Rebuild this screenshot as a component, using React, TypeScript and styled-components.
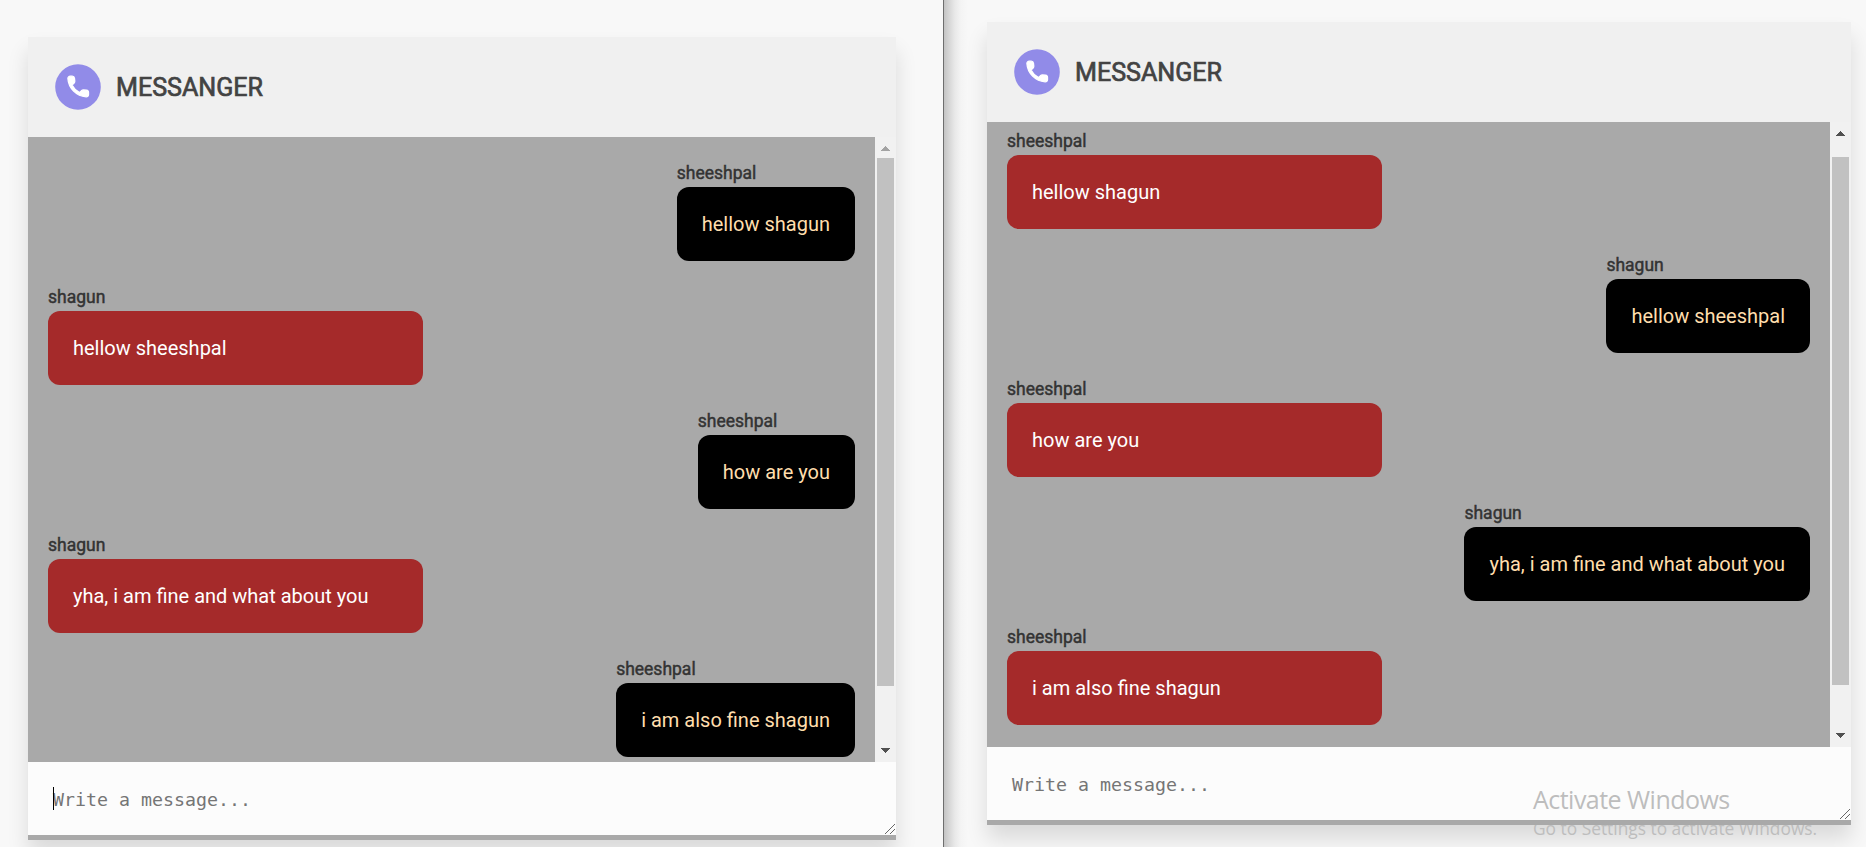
import React from "react";
import styled, { createGlobalStyle } from "styled-components";

const GlobalStyle = createGlobalStyle`
  * { box-sizing: border-box; }
  body { margin: 0; background: #f8f8f8; overflow: hidden; }
`;

const Screen = styled.div`
  display: flex;
  width: 1866px;
  height: 847px;
  overflow: hidden;
  font-family: Roboto, "Liberation Sans", sans-serif;
  background: #f8f8f8;
`;

const Pane = styled.section<{ $w: number; $pad: string; $divided?: boolean }>`
  flex: 0 0 ${(p) => p.$w}px;
  height: 847px;
  padding: ${(p) => p.$pad};
  overflow: hidden;
  ${(p) =>
    p.$divided &&
    `border-left: 1px solid #6e6e6e;
     background: linear-gradient(to right, #c4c4c4 0, #d6d6d6 5px, #e9e9e9 11px, #f4f4f4 17px, #f8f8f8 24px);`}
`;

const Card = styled.div`
  display: flex;
  flex-direction: column;
  box-shadow: 0 14px 20px rgba(0, 0, 0, 0.12);
`;

const Header = styled.header`
  display: flex;
  align-items: center;
  height: 100px;
  padding-left: 27px;
  gap: 13px;
  background: #f0f0f0;
`;

const Title = styled.h1`
  margin: 1px 0 0;
  font-size: 25.1px;
  font-weight: 400;
  line-height: 30px;
  -webkit-text-stroke: 0.7px #434343;
  color: #434343;
`;

const Chat = styled.div`
  display: flex;
  height: 625px;
  background: #a9a9a9;
`;

const Messages = styled.div<{ $top: number }>`
  flex: 1;
  display: flex;
  flex-direction: column;
  gap: 25px;
  padding: ${(p) => p.$top}px 20px 0;
  overflow: hidden;
`;

const Message = styled.div<{ $mine?: boolean }>`
  align-self: ${(p) => (p.$mine ? "flex-end" : "flex-start")};
  width: ${(p) => (p.$mine ? "auto" : "375px")};
`;

const Sender = styled.div`
  height: 25px;
  font-size: 17.5px;
  line-height: 23px;
  font-weight: 400;
  -webkit-text-stroke: 0.45px #333;
  color: #333;
`;

const Bubble = styled.div<{ $mine?: boolean }>`
  height: 74px;
  padding: 25px;
  border-radius: 12px;
  font-size: 20px;
  line-height: 24px;
  white-space: nowrap;
  color: ${(p) => (p.$mine ? "#ffdead" : "#fff")};
  background: ${(p) => (p.$mine ? "#000" : "#a52a2a")};
`;

const Scrollbar = styled.div`
  display: flex;
  flex-direction: column;
  align-items: center;
  flex: 0 0 21px;
  padding: 9px 0;
  background: #f1f1f1;
`;

const Thumb = styled.div<{ $before: number }>`
  width: 17px;
  height: 528px;
  margin: ${(p) => p.$before}px 0 auto;
  background: #c1c1c1;
`;

const Arrow = styled.svg`
  display: block;
  width: 9px;
  height: 5px;
`;

const Composer = styled.div`
  position: relative;
  height: 73px;
  padding: 25px;
  background: #fcfcfc;
  font-family: "DejaVu Sans Mono", "Liberation Mono", monospace;
  font-size: 18.27px;
  line-height: 25px;
  color: #757575;
`;

const Caret = styled.span`
  position: absolute;
  left: 25px;
  top: 25px;
  width: 1px;
  height: 23px;
  background: #000;
`;

const Grip = styled.svg`
  position: absolute;
  right: 1px;
  bottom: 1px;
  width: 10px;
  height: 10px;
`;

const Bar = styled.div`
  position: relative;
  z-index: 2;
  height: 5px;
  background: #a9a9a9;
`;

const Watermark = styled.div`
  position: absolute;
  z-index: 1;
  left: 1533px;
  top: 782px;
  font-family: "Open Sans", "Noto Sans", sans-serif;
  white-space: nowrap;
  color: #bdbdbd;
`;

const WatermarkTitle = styled.div`
  font-size: 25px;
  line-height: 34px;
  letter-spacing: -0.53px;
`;

const WatermarkText = styled.div`
  font-size: 17.35px;
  line-height: 25px;
`;

const BadgeSvg = styled.svg`
  display: block;
  width: 48px;
  height: 48px;
`;

const PhoneBadge = () => (
  <BadgeSvg viewBox="0 0 48 48">
    <circle cx="23" cy="24" r="22.8" fill="#918be8" />
    <g transform="translate(9.4 9.7) scale(1.15)">
      <path
        fill="#fff"
        stroke="#fff"
        strokeWidth="1.1"
        strokeLinejoin="round"
        d="M19.23 15.26l-2.54-.29a1.99 1.99 0 0 0-1.64.57l-1.84 1.84a15.05 15.05 0 0 1-6.59-6.59l1.85-1.85c.43-.43.64-1.03.57-1.64l-.29-2.52a2 2 0 0 0-1.99-1.77H5.03c-1.13 0-2.07.94-2 2.07.53 8.54 7.36 15.36 15.89 15.89 1.13.07 2.07-.87 2.07-2v-1.73c.01-1.01-.75-1.86-1.76-1.98z"
      />
    </g>
  </BadgeSvg>
);

type Entry = { from: string; text: string };
const thread: Entry[] = [
  { from: "sheeshpal", text: "hellow shagun" },
  { from: "shagun", text: "hellow sheeshpal" },
  { from: "sheeshpal", text: "how are you" },
  { from: "shagun", text: "yha, i am fine and what about you" },
  { from: "sheeshpal", text: "i am also fine shagun" },
];

type MessengerProps = { user: string; top: number; thumb: number; atTop?: boolean; focused?: boolean };

const Messenger = ({ user, top, thumb, atTop, focused }: MessengerProps) => (
  <Card>
    <Header>
      <PhoneBadge />
      <Title>MESSANGER</Title>
    </Header>
    <Chat>
      <Messages $top={top}>
        {thread.map((m) => (
          <Message key={m.text} $mine={m.from === user}>
            <Sender>{m.from}</Sender>
            <Bubble $mine={m.from === user}>{m.text}</Bubble>
          </Message>
        ))}
      </Messages>
      <Scrollbar>
        <Arrow viewBox="0 0 9 5" shapeRendering="crispEdges">
          <path d="M4.5 0L9 5H0z" fill={atTop ? "#a3a3a3" : "#505050"} />
        </Arrow>
        <Thumb $before={thumb} />
        <Arrow viewBox="0 0 9 5" shapeRendering="crispEdges">
          <path d="M0 0H9L4.5 5z" fill="#505050" />
        </Arrow>
      </Scrollbar>
    </Chat>
    <Composer>
      {focused && <Caret />}
      Write a message...
      <Grip viewBox="0 0 10 10">
        <path d="M0 10L10 0M5 10L10 5" stroke="#555" strokeWidth="0.9" fill="none" />
      </Grip>
    </Composer>
    <Bar />
  </Card>
);

export default function App() {
  return (
    <Screen>
      <GlobalStyle />
      <Pane $w={943} $pad="37px 47px 0 28px">
        <Messenger user="sheeshpal" top={25} thumb={7} atTop focused />
      </Pane>
      <Pane $w={923} $pad="22px 15px 0 43px" $divided>
        <Messenger user="shagun" top={8} thumb={21} />
      </Pane>
      <Watermark>
        <WatermarkTitle>Activate Windows</WatermarkTitle>
        <WatermarkText>Go to Settings to activate Windows.</WatermarkText>
      </Watermark>
    </Screen>
  );
}
